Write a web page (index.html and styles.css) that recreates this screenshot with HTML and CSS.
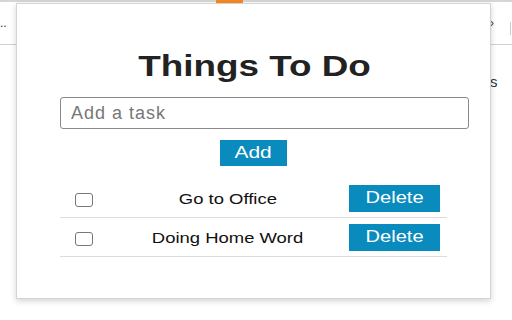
FILE: index.html
```html
<!DOCTYPE html>
<html>
<head>
    <title>Things To Do</title>
    <link rel="stylesheet" href="styles.css">
</head>
<body>
    <div class="browser">
        <div class="badge"></div>
        <div class="toolbar">
            <span class="dots">..</span>
            <span class="arrow">&#8250;</span>
            <span class="divider"></span>
        </div>
        <span class="page-letter">s</span>
    </div>

    <div class="popup">
        <h1><span class="wide">Things To Do</span></h1>
        <input type="text" class="task-input" placeholder="Add a task">
        <button class="btn add-btn"><span class="wide">Add</span></button>

        <table class="tasks">
            <tr>
                <td class="check"><input type="checkbox"></td>
                <td class="name"><span class="wide">Go to Office</span></td>
                <td class="action"><button class="btn"><span class="wide">Delete</span></button></td>
            </tr>
            <tr>
                <td class="check"><input type="checkbox"></td>
                <td class="name"><span class="wide">Doing Home Word</span></td>
                <td class="action"><button class="btn"><span class="wide">Delete</span></button></td>
            </tr>
        </table>
    </div>
</body>
</html>
```

FILE: styles.css
```css
body {
    margin: 0;
    width: 512px;
    height: 320px;
    background: white;
    font-family: Arial, "Liberation Sans", sans-serif;
    position: relative;
    overflow: hidden;
}

.browser {
    position: absolute;
    inset: 0;
    border-top: 2px solid #d6d6d6;
}

.badge {
    position: absolute;
    left: 216px;
    top: -2px;
    width: 27px;
    height: 5px;
    background: #f68a1e;
    border-radius: 0 0 3px 3px;
}

.toolbar {
    height: 42px;
    border-bottom: 1px solid #d0d0d0;
    position: relative;
}

.dots {
    position: absolute;
    left: 0;
    top: 14px;
    font-size: 12px;
    color: #333;
}

.arrow {
    position: absolute;
    left: 490px;
    top: 14px;
    font-size: 12px;
    color: #444;
}

.divider {
    position: absolute;
    left: 510px;
    top: 20px;
    width: 1px;
    height: 13px;
    background: #ccc;
}

.page-letter {
    position: absolute;
    left: 490px;
    top: 71px;
    font-size: 15px;
    color: #333;
}

.popup {
    position: absolute;
    left: 16px;
    top: 3px;
    width: 475px;
    height: 296px;
    background: white;
    border: 1px solid #d4d4d4;
    box-shadow: 0 2px 6px rgba(0,0,0,0.18);
    padding: 0 43px;
    box-sizing: border-box;
    display: flex;
    flex-direction: column;
    align-items: center;
}

/* the screenshot is stretched sideways, so text is widened to match */
.wide {
    display: inline-block;
    transform: scaleX(1.23);
}

h1 {
    margin: 45px 0 0 2px;
    font-size: 29px;
    line-height: 34px;
    font-weight: bold;
    color: #222;
}

h1 .wide {
    transform: scaleX(1.27);
}

.task-input {
    margin-top: 14px;
    width: 409px;
    height: 32px;
    box-sizing: border-box;
    border: 1px solid #8a8a8a;
    border-radius: 3px;
    padding: 0 10px;
    font-size: 18px;
    letter-spacing: 1px;
    font-family: Arial, "Liberation Sans", sans-serif;
    align-self: flex-start;
}

.task-input::placeholder {
    color: #777;
}

.btn {
    background: #0a8bbd;
    color: white;
    border: none;
    font-size: 17px;
    font-family: Arial, "Liberation Sans", sans-serif;
    padding: 0;
}

.add-btn {
    margin-top: 11px;
    width: 67px;
    height: 26px;
}

.tasks {
    margin-top: 13px;
    width: 387px;
    border-collapse: collapse;
    align-self: flex-start;
}

.tasks td {
    border-bottom: 1px solid #dcdcdc;
    height: 38px;
    padding: 0;
    font-size: 15px;
    color: #111;
}

.check {
    width: 48px;
    text-align: center;
}

.check input {
    width: 18px;
    height: 14px;
    margin: 0;
    appearance: none;
    border: 1px solid #777;
    border-radius: 3px;
    vertical-align: middle;
}

.name {
    text-align: center;
}

.tasks .action {
    width: 98px;
    padding-left: 2px;
}

.action .btn {
    width: 91px;
    height: 27px;
}

.action .wide {
    transform: scaleX(1.18);
}
```
